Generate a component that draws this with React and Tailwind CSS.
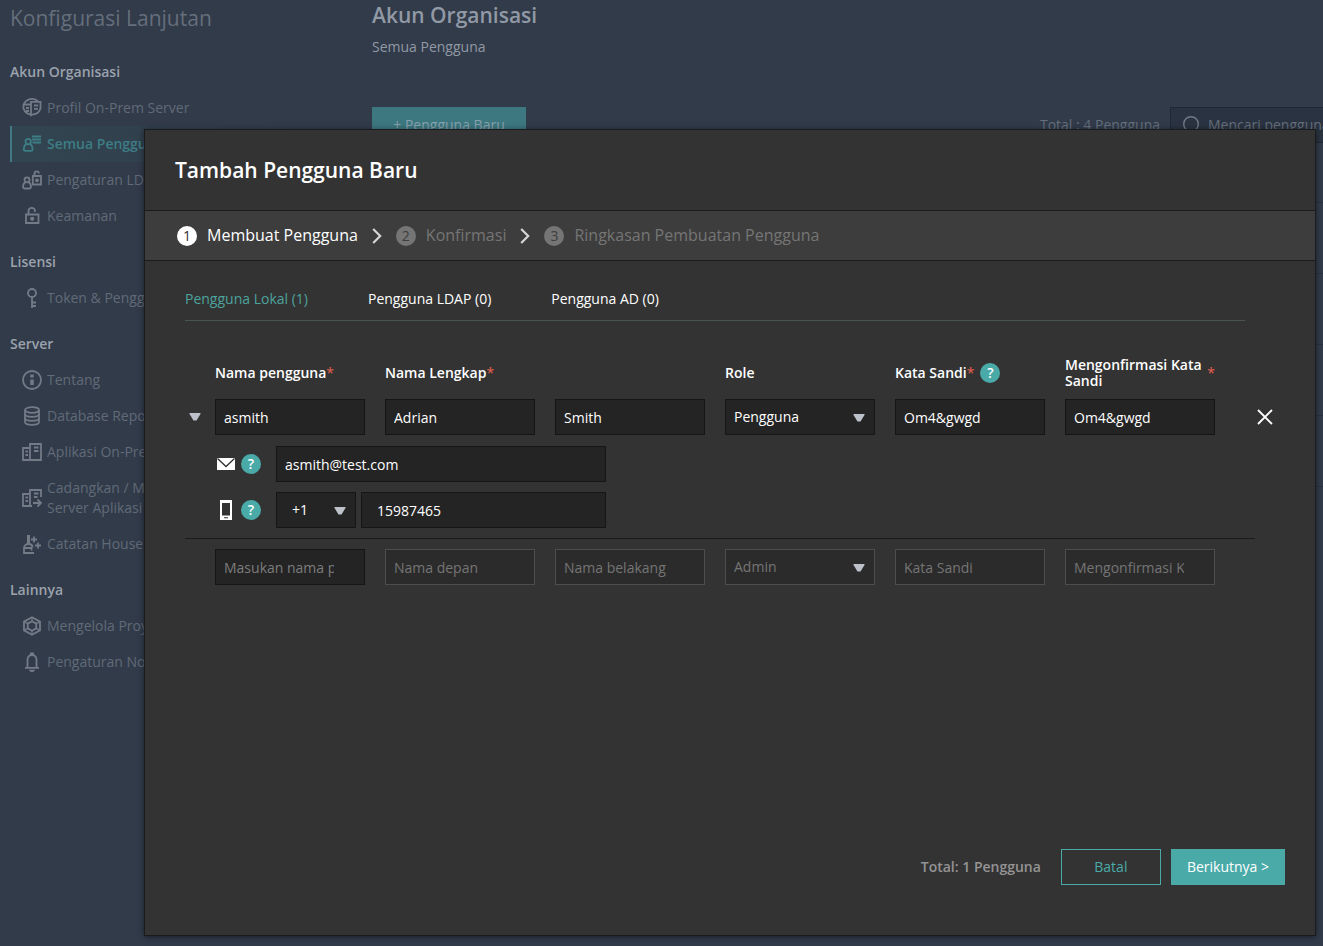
import React, { useState } from "react";

const ICONS = {
  profile: (
    <>
      <path d="M1.500 6.500h7.500M1.500 6.500v4a9 9 0 0 0 17 0V3.800H9v14.400" />
      <path d="M1.500 7A9 9 0 0 1 16.500 3.800" />
      <path d="M12 7.500h4M12 10.800h4M4 10h3M4 13h3" />
    </>
  ),
  users: (
    <>
      <circle cx="6.200" cy="7.600" r="2.700" />
      <path d="M4.600 9.800C3.400 10.500 1.800 13 1.800 15.200c0 1 .7 1.600 1.700 1.600h5.400c1 0 1.700-.6 1.700-1.600C10.600 13 9 10.500 7.800 9.800" />
      <path d="M10 2.500h9M10 5.500h9M10.500 8.500H19" />
    </>
  ),
  ldap: (
    <>
      <circle cx="5" cy="9.800" r="2.500" />
      <path d="M3.600 12C2.400 12.700 1 15 1 17c0 1 .7 1.500 1.600 1.500h4.800c.9 0 1.600-.5 1.600-1.500 0-2-1.400-4.300-2.600-5" />
      <path d="M10.800 6H19v8.500h-8.200zM12.500 6V3.500a2.200 2.200 0 0 1 4.400 0" />
      <circle cx="15" cy="10.300" r="1" fill="currentColor" />
    </>
  ),
  lock: (
    <>
      <path d="M4 8.500h12.500V17H4zM6.500 8.500V5a3.200 3.200 0 0 1 6.400 0v1" />
      <circle cx="10.200" cy="12.800" r="1.200" fill="currentColor" />
    </>
  ),
  token: (
    <>
      <circle cx="10" cy="5" r="4" />
      <path d="M10 9v11M10 14.500h4M10 18h4" />
    </>
  ),
  info: (
    <>
      <circle cx="10" cy="10" r="9" />
      <path d="M10 9.500v5.500" strokeWidth="3.500" />
      <path d="M10 4.500v3" strokeWidth="3.500" />
    </>
  ),
  database: (
    <>
      <ellipse cx="10" cy="4" rx="7" ry="2.800" />
      <path d="M3 4v12c0 1.600 3.100 2.800 7 2.800s7-1.200 7-2.800V4" />
      <path d="M3 8c0 1.600 3.100 2.800 7 2.800S17 9.600 17 8M3 12c0 1.600 3.100 2.800 7 2.800s7-1.200 7-2.800" />
    </>
  ),
  apps: (
    <>
      <path d="M8 18H1V6h7M8 2h11v16H8z" />
      <path d="M3.500 9.500h2.500M3.500 13h2.500M12 5.500h4.500M12 9h4.500" />
    </>
  ),
  backup: (
    <>
      <path d="M8 18H1V6h7M19 9V2H8v16M8 18h2" />
      <path d="M3.500 9.500h2.500M3.500 13h2.500M12 5.500h4.500M12 9h3.500" />
      <path d="M11 15h7.500M15.500 11.500L19 15l-3.500 3.500" />
    </>
  ),
  clean: (
    <>
      <path d="M6.500 10V1" strokeWidth="3" />
      <path d="M10.500 13.500c0-2.300-1.500-3.500-4-3.500S2 11.500 2 14v5h10M2 14h7.500v2.500" />
      <path d="M12 2.500v6M9 5.500h6M16 8.500v6M13 11.500h6" />
    </>
  ),
  project: (
    <>
      <path d="M10 1.200l8 4.400v8.800l-8 4.400-8-4.400V5.600z" />
      <path d="M10 5.200l4.200 2.400v4.800L10 14.800l-4.200-2.400V7.600z" />
      <path
        d="M10 1.200v4M18 5.600l-3.800 2M18 14.400l-3.800-2M10 18.800v-4M2 14.400l3.800-2M2 5.600l3.800 2"
        strokeWidth="1.200"
      />
    </>
  ),
  bell: (
    <>
      <path d="M3 15.800h14M5.500 15V8c0-3 1.800-4.800 4.500-4.800S14.500 5 14.500 8v7" />
      <path d="M10 .5v3" strokeWidth="4" />
      <path d="M7.500 18.200a2.500 1.300 0 0 0 5 0z" fill="currentColor" strokeWidth="1" />
    </>
  ),
};

const MENU = [
  {
    title: "Akun Organisasi",
    items: [
      { icon: "profile", label: "Profil On-Prem Server" },
      { icon: "users", label: "Semua Pengguna", active: true },
      { icon: "ldap", label: "Pengaturan LDAP" },
      { icon: "lock", label: "Keamanan" },
    ],
  },
  {
    title: "Lisensi",
    items: [{ icon: "token", label: "Token & Pengguna" }],
  },
  {
    title: "Server",
    items: [
      { icon: "info", label: "Tentang" },
      { icon: "database", label: "Database Repository" },
      { icon: "apps", label: "Aplikasi On-Prem" },
      { icon: "backup", label: "Cadangkan / Memulihkan Server Aplikasi" },
      { icon: "clean", label: "Catatan Housekeeping" },
    ],
  },
  {
    title: "Lainnya",
    items: [
      { icon: "project", label: "Mengelola Proyek" },
      { icon: "bell", label: "Pengaturan Notifikasi" },
    ],
  },
];

const STEPS = ["Membuat Pengguna", "Konfirmasi", "Ringkasan Pembuatan Pengguna"];
const TABS = ["Pengguna Lokal (1)", "Pengguna LDAP (0)", "Pengguna AD (0)"];

const FIELD = "h-9 w-full min-w-0 border pl-2 pr-[30px] text-sm outline-none";
const FILLED = "border-[#161616] bg-[#242424] text-white placeholder:text-[#7c7c7c]";
const EMPTY = "border-[#4d4d4d] bg-[#2b2b2b] text-[#757575] placeholder:text-[#757575]";

const Sidebar = () => (
  <aside className="w-[362px] shrink-0 pl-[10px]">
    <h1 className="h-[54px] text-[21px] leading-9 text-[#656e7b]">Konfigurasi Lanjutan</h1>
    <nav className="flex w-[283px] flex-col gap-[10px]">
      {MENU.map((group) => (
        <section key={group.title}>
          <h2 className="text-sm leading-9 font-semibold text-[#9ba2ad]">{group.title}</h2>
          {group.items.map((item) => (
            <a
              key={item.label}
              href="#"
              className={`flex min-h-9 items-center gap-[5px] border-l-2 py-2 pl-[10px] text-sm leading-5 ${
                item.active
                  ? "border-[#427883] bg-linear-to-r from-[#314550] to-[#313b4a] font-semibold text-[#3d7d85]"
                  : "border-transparent text-[#616a77]"
              }`}
            >
              <svg
                viewBox="0 0 20 20"
                className={`h-5 w-5 shrink-0 ${item.active ? "" : "text-[#737b87]"}`}
                fill="none"
                stroke="currentColor"
                strokeWidth="1.8"
              >
                {ICONS[item.icon]}
              </svg>
              <span className="max-w-[190px]">{item.label}</span>
            </a>
          ))}
        </section>
      ))}
    </nav>
  </aside>
);

const UserList = () => (
  <main className="min-w-0 flex-1 pl-[10px]">
    <h2 className="pb-1 text-[21px] leading-[30px] font-semibold text-[#9199a5]">Akun Organisasi</h2>
    <p className="text-sm leading-[26px] text-[#9199a5]">Semua Pengguna</p>
    <div className="mt-[47px] flex h-9 items-center">
      <button type="button" className="h-9 w-[154px] shrink-0 bg-[#3d7780] text-sm text-[#86a2ae]">
        + Pengguna Baru
      </button>
      <span className="ml-auto shrink-0 text-sm text-[#656e7b]">Total : 4 Pengguna</span>
      <label className="-mr-12 ml-[10px] flex h-9 w-[201px] shrink-0 items-center gap-2 border border-[#1f2733] bg-[#2a3341] pl-[11px]">
        <svg
          viewBox="0 0 18 18"
          className="h-[18px] w-[18px] shrink-0 text-[#737b87]"
          fill="none"
          stroke="currentColor"
          strokeWidth="1.4"
        >
          <circle cx="9" cy="8" r="7.3" />
          <path d="M14 13.500l3.500 4" />
        </svg>
        <input
          type="search"
          placeholder="Mencari pengguna"
          className="w-full min-w-0 bg-transparent text-sm outline-none placeholder:text-[#656e7b]"
        />
      </label>
    </div>
    <div className="h-[60px] border-b border-[#283140]" />
    {[1, 2, 3, 4].map((row) => (
      <div key={row} className="h-[71px] border-b border-[#283140]" />
    ))}
  </main>
);

const Triangle = ({ className = "" }) => (
  <svg viewBox="0 0 12 8" className={`h-2 w-3 ${className}`} fill="#bcc1ca">
    <path d="M.5 0h11v1L7.500 7.500h-3L.5 1z" />
  </svg>
);

const SelectField = ({ id, label, options, tone, pad = "pl-2" }) => (
  <div className="relative w-full">
    <select
      id={id}
      aria-label={label}
      className={`h-9 w-full appearance-none border pb-px text-sm outline-none ${pad} ${tone}`}
    >
      {options.map((option) => (
        <option key={option}>{option}</option>
      ))}
    </select>
    <Triangle className="pointer-events-none absolute top-[15px] right-[10px]" />
  </div>
);

const Help = () => (
  <button
    type="button"
    aria-label="Bantuan"
    className="flex h-5 w-5 shrink-0 items-center justify-center rounded-full bg-[#49aaa8] text-sm leading-5 font-semibold text-white"
  >
    ?
  </button>
);

const Required = () => <span className="font-normal text-[#e8604f]">*</span>;

const Chevron = () => (
  <svg viewBox="0 0 10 16" className="h-4 w-[10px] shrink-0" fill="none" stroke="#d6d6d6" strokeWidth="2.2">
    <path d="M1.200 1l7 7-7 7" />
  </svg>
);

const FormRow = ({ before, after, children }) => (
  <div className="flex items-center">
    <div className="w-[30px] shrink-0 pl-1">{before}</div>
    <div className="grid flex-1 grid-cols-6 items-center gap-5">{children}</div>
    <div className="flex w-[60px] shrink-0 justify-end">{after}</div>
  </div>
);

const UserForm = () => (
  <form className="mt-9 pr-10 pl-10">
    <FormRow>
      <label htmlFor="username" className="text-sm font-semibold whitespace-nowrap">
        Nama pengguna<Required />
      </label>
      <label htmlFor="first" className="col-span-2 text-sm font-semibold">
        Nama Lengkap<Required />
      </label>
      <label htmlFor="role" className="text-sm font-semibold">
        Role
      </label>
      <div className="flex items-center gap-[6px]">
        <label htmlFor="password" className="text-sm font-semibold whitespace-nowrap">
          Kata Sandi<Required />
        </label>
        <Help />
      </div>
      <label htmlFor="confirm" className="flex items-center justify-between text-sm leading-4 font-semibold">
        <span className="w-[140px]">Mengonfirmasi Kata Sandi</span>
        <Required />
      </label>
    </FormRow>

    <div className="mt-[10px]">
      <FormRow
        before={
          <button type="button" aria-label="Ciutkan" className="block">
            <Triangle />
          </button>
        }
        after={
          <button type="button" aria-label="Hapus" className="flex h-5 w-5 items-center justify-center">
            <svg viewBox="0 0 16 16" className="h-4 w-4" fill="none" stroke="#fff" strokeWidth="1.8">
              <path d="M1 1l14 14M15 1L1 15" />
            </svg>
          </button>
        }
      >
        <input id="username" defaultValue="asmith" className={`${FIELD} ${FILLED}`} />
        <input id="first" defaultValue="Adrian" className={`${FIELD} ${FILLED}`} />
        <input aria-label="Nama belakang" defaultValue="Smith" className={`${FIELD} ${FILLED}`} />
        <SelectField id="role" options={["Pengguna", "Admin"]} tone={FILLED} />
        <input id="password" defaultValue="Om4&gwgd" className={`${FIELD} ${FILLED}`} />
        <input id="confirm" defaultValue="Om4&gwgd" className={`${FIELD} ${FILLED}`} />
      </FormRow>
    </div>

    <div className="mt-[11px] flex items-center pl-[30px]">
      <div className="flex w-[61px] shrink-0 items-center gap-[5px]">
        <svg viewBox="0 0 21 20" className="h-5 w-[21px]">
          <path d="M2 4h18v12H2z" fill="#fff" />
          <path d="M2.500 4.500L11 12.500l8.500-8" fill="none" stroke="#333" strokeWidth="1.3" />
        </svg>
        <Help />
      </div>
      <input
        type="email"
        aria-label="Email"
        defaultValue="asmith@test.com"
        className={`${FIELD} ${FILLED} max-w-[330px]`}
      />
    </div>

    <div className="mt-[10px] flex items-center pl-[30px]">
      <div className="flex w-[61px] shrink-0 items-center gap-[5px]">
        <svg viewBox="0 0 21 20" className="h-5 w-[21px]">
          <path d="M5 0h12v20H5zM7 3v12.500h8V3zM9 17.300v1h4v-1z" fill="#fff" fillRule="evenodd" />
        </svg>
        <Help />
      </div>
      <div className="flex w-full max-w-[330px] gap-[5px]">
        <div className="w-20 shrink-0">
          <SelectField label="Kode negara" options={["+1", "+62"]} tone={FILLED} pad="pl-[15px]" />
        </div>
        <input
          type="tel"
          aria-label="Telepon"
          defaultValue="15987465"
          className={`h-9 w-full min-w-0 border pl-[15px] text-sm outline-none ${FILLED}`}
        />
      </div>
    </div>

    <hr className="my-[10px] mr-5 border-[#1b1b1b]" />

    <FormRow>
      <input aria-label="Nama pengguna baru" placeholder="Masukan nama pengguna" className={`${FIELD} ${FILLED}`} />
      <input aria-label="Nama depan baru" placeholder="Nama depan" className={`${FIELD} ${EMPTY}`} />
      <input aria-label="Nama belakang baru" placeholder="Nama belakang" className={`${FIELD} ${EMPTY}`} />
      <SelectField label="Role baru" options={["Admin", "Pengguna"]} tone={EMPTY} />
      <input aria-label="Kata sandi baru" placeholder="Kata Sandi" className={`${FIELD} ${EMPTY}`} />
      <input
        aria-label="Konfirmasi kata sandi baru"
        placeholder="Mengonfirmasi Kata Sandi"
        className={`${FIELD} ${EMPTY}`}
      />
    </FormRow>
  </form>
);

const AddUserDialog = () => {
  const [tab, setTab] = useState(0);

  return (
    <div
      role="dialog"
      aria-labelledby="dialog-title"
      className="flex min-w-0 flex-1 flex-col border border-[#1a1b1d] bg-[#333333] text-white shadow-[0_1px_6px_rgba(0,0,0,0.5)]"
    >
      <h2 id="dialog-title" className="px-[30px] text-[21px] leading-[80px] font-semibold">
        Tambah Pengguna Baru
      </h2>

      <ol className="flex h-[51px] items-center gap-[14px] border-y border-[#1b1b1b] bg-[#3d3d3d] px-8 text-base">
        {STEPS.map((step, i) => (
          <li key={step} className="flex items-center gap-[14px]">
            {i > 0 && <Chevron />}
            <span className="flex items-center gap-[10px]">
              <span
                className={`flex h-5 w-5 items-center justify-center rounded-full text-sm leading-5 ${
                  i === 0 ? "bg-white text-[#333333]" : "bg-[#757575] text-[#3d3d3d]"
                }`}
              >
                {i + 1}
              </span>
              <span className={`pb-[2px] ${i === 0 ? "text-white" : "text-[#757575]"}`}>{step}</span>
            </span>
          </li>
        ))}
      </ol>

      <div role="tablist" className="mt-[17px] mr-[70px] ml-10 flex gap-[60px] border-b border-[#4a5454]">
        {TABS.map((label, i) => (
          <button
            key={label}
            type="button"
            role="tab"
            aria-selected={tab === i}
            onClick={() => setTab(i)}
            className={`h-[42px] text-sm ${tab === i ? "text-[#4da39d]" : "text-white"}`}
          >
            {label}
          </button>
        ))}
      </div>

      <UserForm />

      <footer className="mt-auto flex items-center justify-end px-[30px] pb-[50px] text-sm">
        <span className="mr-5 font-semibold text-[#949494]">Total: 1 Pengguna</span>
        <button type="button" className="mr-[10px] h-9 w-[100px] border border-[#49aaa8] text-[#49aaa8]">
          Batal
        </button>
        <button type="button" className="h-9 bg-[#49aaa8] px-4 text-white">
          Berikutnya &gt;
        </button>
      </footer>
    </div>
  );
};

const App = () => (
  <div className="relative min-h-screen overflow-hidden bg-[#313b4a] font-['Open_Sans',sans-serif]">
    <div className="flex">
      <Sidebar />
      <UserList />
    </div>
    <div className="absolute inset-0 flex pt-[129px] pr-[7px] pb-[10px] pl-36">
      <AddUserDialog />
    </div>
  </div>
);

export default App;
